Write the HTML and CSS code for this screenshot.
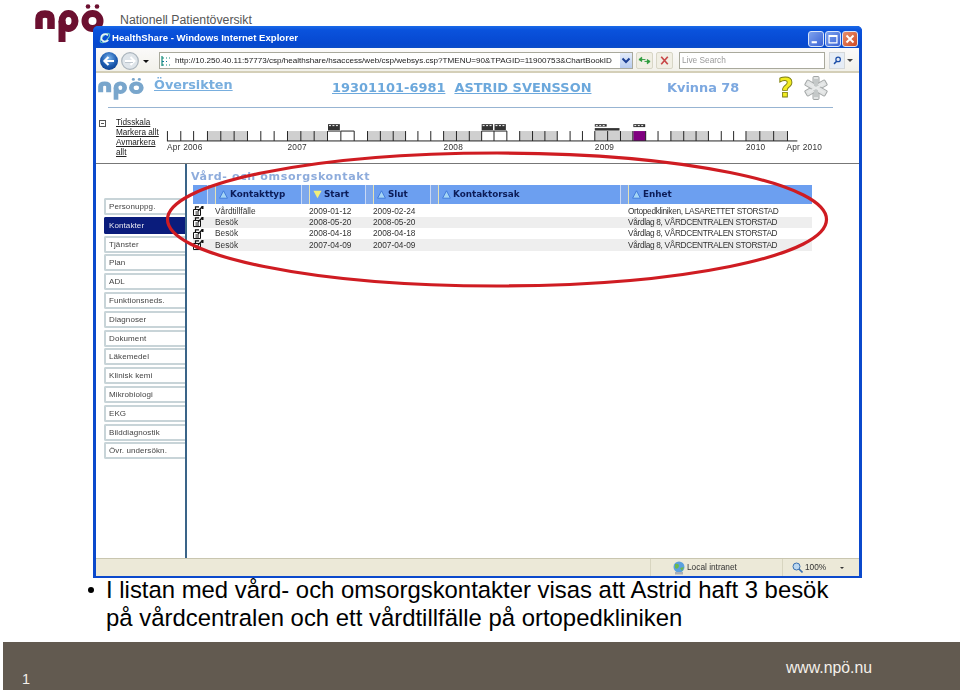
FILE: index.html
```html
<!DOCTYPE html>
<html lang="sv">
<head>
<meta charset="utf-8">
<title>Nationell Patientöversikt</title>
<link rel="stylesheet" href="styles.css">
</head>
<body>
<svg class="defs" width="0" height="0" aria-hidden="true">
  <symbol id="npo" viewBox="35 4 69 38.5" preserveAspectRatio="none">
    <path d="M39 29V19Q39 14 45 14Q51 14 51 19V29" fill="none" stroke="currentColor" stroke-width="7.5"/>
    <path d="M62 42V21" fill="none" stroke="currentColor" stroke-width="7"/>
    <ellipse cx="68.5" cy="21" rx="6.5" ry="7.5" fill="none" stroke="currentColor" stroke-width="7"/>
    <ellipse cx="92.5" cy="21" rx="7.5" ry="7.5" fill="none" stroke="currentColor" stroke-width="7"/>
    <circle cx="88" cy="6.5" r="2.3" fill="currentColor"/>
    <circle cx="97" cy="6.5" r="2.3" fill="currentColor"/>
  </symbol>
  <symbol id="edit" viewBox="0 0 11 10">
    <path d="M.5 3.5H7.5V9.5H.5ZM2.5 6H6M2.5 8H6" fill="#fff" stroke="#111" stroke-width="1"/>
    <path d="M2.5 3V.8H6M5 5L9.5 .5" fill="none" stroke="#111" stroke-width="1.2"/>
    <rect x="8.5" y="0" width="2" height="3" fill="#111"/>
  </symbol>
  <symbol id="tri-blue" viewBox="0 0 9 9">
    <path d="M4.5 .8L8.4 8.2H.6Z" fill="#a5d5f5" stroke="#3c76d8" stroke-width=".9"/>
  </symbol>
  <symbol id="tri-yellow" viewBox="0 0 9 9">
    <path d="M.4 .8H8.6L4.5 8.2Z" fill="#f2ee7a"/>
  </symbol>
</svg>

<div class="slide">
  <header class="brand">
    <svg class="brand-logo"><use href="#npo"/></svg>
    <span class="brand-name">Nationell Patientöversikt</span>
  </header>

  <section class="window">
    <div class="titlebar">
      <svg class="ie-icon" viewBox="0 0 12 12">
        <ellipse cx="6" cy="6" rx="6" ry="2.6" transform="rotate(-45 6 6)" fill="none" stroke="#6fd0c0" stroke-width="1"/>
        <path d="M9 3.4A3.8 3.8 0 1 0 9.2 8" fill="none" stroke="#e6f4f4" stroke-width="1.8"/>
      </svg>
      <span class="title-text">HealthShare - Windows Internet Explorer</span>
      <div class="win-buttons">
        <span class="win-btn"><svg viewBox="0 0 16 15"><rect x="3" y="10" width="6" height="2.4" fill="#fff"/></svg></span>
        <span class="win-btn"><svg viewBox="0 0 16 15"><path d="M3.5 3.5H12.5V12H3.5ZM3.5 4.5H12.5" fill="none" stroke="#fff" stroke-width="1.4"/></svg></span>
        <span class="win-btn win-close"><svg viewBox="0 0 16 15"><path d="M4 3.5L12 11.5M12 3.5L4 11.5" stroke="#fff" stroke-width="2.2"/></svg></span>
      </div>
    </div>

    <div class="toolbar">
      <svg class="nav-icon" viewBox="0 0 18 18">
        <defs><radialGradient id="bk" cx=".5" cy=".35" r=".7"><stop offset="0" stop-color="#7cb6ee"/><stop offset=".6" stop-color="#1d5cb0"/><stop offset="1" stop-color="#0d3d88"/></radialGradient></defs>
        <circle cx="9" cy="9" r="9" fill="url(#bk)"/>
        <path d="M14 9H5M8.5 5L4.5 9L8.5 13" fill="none" stroke="#fff" stroke-width="2.2"/>
      </svg>
      <svg class="nav-icon nav-fwd" viewBox="0 0 18 18">
        <circle cx="9" cy="9" r="8.3" fill="#dfe5ea" stroke="#aab4bc" stroke-width="1.2"/>
        <path d="M4 9H13M9.5 5L13.5 9L9.5 13" fill="none" stroke="#fff" stroke-width="2"/>
        <path d="M4 10.5H12" stroke="#b4bec6" stroke-width=".8"/>
      </svg>
      <span class="nav-arrow"></span>
      <div class="address">
        <svg class="favicon" viewBox="0 0 11 12">
          <path d="M1 1V11M1 3H3M5 3H6M8 3H9M1 10H3M5 10H6M8 10H9" stroke="#128a78" stroke-width="1.2" fill="none"/>
          <path d="M1 6.5H3M5 6.5H6" stroke="#127a98" stroke-width="1"/>
        </svg>
        <span class="url">http://10.250.40.11:57773/csp/healthshare/hsaccess/web/csp/websys.csp?TMENU=90&amp;TPAGID=11900753&amp;ChartBookID</span>
        <span class="addr-drop"><svg viewBox="0 0 12 14"><path d="M2.5 5L6 8.5L9.5 5" fill="none" stroke="#1c3f94" stroke-width="2"/></svg></span>
      </div>
      <span class="tool-btn"><svg viewBox="0 0 16 14"><path d="M2 6L5 3.5V8ZM5 6H9M14 8L11 10.5V6ZM11 8H8" fill="#2a9a3a" stroke="#2a9a3a"/></svg></span>
      <span class="tool-btn"><svg viewBox="0 0 16 14"><path d="M4.5 3L11.5 11M11.5 3L4.5 11" stroke="#c84848" stroke-width="1.8"/></svg></span>
      <div class="search"><span class="search-text">Live Search</span></div>
      <span class="search-btn"><svg viewBox="0 0 12 12"><circle cx="7.5" cy="4.5" r="3" fill="none" stroke="#1c4ea8" stroke-width="1.6"/><path d="M5.5 7L2 10.5" stroke="#1c4ea8" stroke-width="2"/></svg></span>
      <span class="search-drop"></span>
    </div>

    <div class="page">
      <div class="app-head">
        <svg class="app-logo"><use href="#npo"/></svg>
        <a class="app-title">Översikten</a>
        <div class="patient"><a>19301101-6981</a><a>ASTRID SVENSSON</a></div>
        <span class="gender">Kvinna 78</span>
        <span class="help">?</span>
        <svg class="star" viewBox="0 0 24 24">
          <g fill="#e2e4e4" stroke="#a2a6a6" stroke-width="1">
            <rect x="9" y=".5" width="6" height="23" rx="1"/>
            <rect x="9" y=".5" width="6" height="23" rx="1" transform="rotate(60 12 12)"/>
            <rect x="9" y=".5" width="6" height="23" rx="1" transform="rotate(120 12 12)"/>
          </g>
          <path d="M12 3V21" stroke="#c4c8c8" stroke-width="4"/>
          <path d="M12 3V21" stroke="#e8eaea" stroke-width="2" transform="rotate(60 12 12)"/>
          <path d="M12 3V21" stroke="#e8eaea" stroke-width="2" transform="rotate(120 12 12)"/>
        </svg>
      </div>
      <div class="head-rule"></div>

      <div class="timeline">
        <span class="collapse"></span>
        <div class="tl-links">
          <a>Tidsskala</a>
          <a>Markera allt</a>
          <a>Avmarkera allt</a>
        </div>
        <svg class="tl-chart" viewBox="162 108 673 56">
          <g fill="#cfcfcf">
            <rect x="208" y="131" width="40.5" height="10"/>
            <rect x="289" y="131" width="40.5" height="10"/>
            <rect x="370" y="131" width="38.5" height="10"/>
            <rect x="447" y="131" width="38.5" height="10"/>
            <rect x="524" y="131" width="38" height="10"/>
            <rect x="600" y="131" width="38.5" height="10"/>
            <rect x="677" y="131" width="38" height="10"/>
            <rect x="753" y="131" width="42" height="10"/>
          </g>
          <rect x="639" y="131" width="12.5" height="10" fill="#800080"/>
          <path d="M330 131H342.5M343 131H356.5M485.5 131H498M498 131H511" stroke="#222" stroke-width="1" fill="none"/>
          <path fill="none" stroke="#222" stroke-width="1" d="M167 141H805
            M167.5 131V141M181 131V141M194 131V141M208 131V141M221.5 131V141M235 131V141M248.5 131V141M262 131V141M275.5 131V141
            M289 131V141M302.5 131V141M316 131V141M329.5 131V141M343 131V141M356.5 131V141
            M370 131V141M383 131V141M396 131V141M408.5 131V141M421 131V141M434 131V141
            M447 131V141M460 131V141M473 131V141M485.5 131V141M498 131V141M511 131V141
            M524 131V141M537 131V141M549.5 131V141M562 131V141M575 131V141M587.5 131V141
            M600 131V141M613 131V141M626 131V141M638.5 131V141M651.5 131V141M664 131V141
            M677 131V141M690 131V141M702.5 131V141M715 131V141M728 131V141M740.5 131V141
            M753 131V141M767 131V141M781 131V141M795 131V141"/>
          <g fill="#333">
            <rect x="330" y="124" width="12" height="6"/>
            <rect x="485.5" y="124" width="11.5" height="6"/>
            <rect x="498.5" y="124" width="11.5" height="6"/>
            <rect x="600" y="124" width="12" height="2.5"/>
            <rect x="600" y="128" width="25" height="2.5"/>
            <rect x="639" y="124" width="12" height="3"/>
          </g>
          <path d="M331 125.5H341M486.5 125.5H496M499.5 125.5H509M601 125.5H611M640 125.5H650" stroke="#fff" stroke-width="1" stroke-dasharray="2 1.5"/>
          <g class="tl-label">
            <text x="167" y="150">Apr 2006</text>
            <text x="289" y="150">2007</text>
            <text x="447" y="150">2008</text>
            <text x="600" y="150">2009</text>
            <text x="753" y="150">2010</text>
            <text x="794" y="150">Apr 2010</text>
          </g>
        </svg>
      </div>

      <div class="main">
        <nav class="tabs">
          <a class="tab">Personuppg.</a>
          <a class="tab tab-active">Kontakter</a>
          <a class="tab">Tjänster</a>
          <a class="tab">Plan</a>
          <a class="tab">ADL</a>
          <a class="tab">Funktionsneds.</a>
          <a class="tab">Diagnoser</a>
          <a class="tab">Dokument</a>
          <a class="tab">Läkemedel</a>
          <a class="tab">Klinisk kemi</a>
          <a class="tab">Mikrobiologi</a>
          <a class="tab">EKG</a>
          <a class="tab">Bilddiagnostik</a>
          <a class="tab">Övr. undersökn.</a>
        </nav>
        <div class="content">
          <h2 class="section-title">Vård- och omsorgskontakt</h2>
          <div class="grid-head">
            <span class="gh-cell gh-first"></span>
            <span class="gh-cell"><svg class="sort"><use href="#tri-blue"/></svg>Kontakttyp</span>
            <span class="gh-cell"><svg class="sort"><use href="#tri-yellow"/></svg>Start</span>
            <span class="gh-cell"><svg class="sort"><use href="#tri-blue"/></svg>Slut</span>
            <span class="gh-cell"><svg class="sort"><use href="#tri-blue"/></svg>Kontaktorsak</span>
            <span class="gh-cell"><svg class="sort"><use href="#tri-blue"/></svg>Enhet</span>
          </div>
          <div class="grid-row">
            <svg class="row-icon"><use href="#edit"/></svg><span>Vårdtillfälle</span><span>2009-01-12</span><span>2009-02-24</span><span></span><span class="unit">Ortopedkliniken, LASARETTET STORSTAD</span>
          </div>
          <div class="grid-row row-alt">
            <svg class="row-icon"><use href="#edit"/></svg><span>Besök</span><span>2008-05-20</span><span>2008-05-20</span><span></span><span class="unit">Vårdlag 8, VÅRDCENTRALEN STORSTAD</span>
          </div>
          <div class="grid-row">
            <svg class="row-icon"><use href="#edit"/></svg><span>Besök</span><span>2008-04-18</span><span>2008-04-18</span><span></span><span class="unit">Vårdlag 8, VÅRDCENTRALEN STORSTAD</span>
          </div>
          <div class="grid-row row-alt">
            <svg class="row-icon"><use href="#edit"/></svg><span>Besök</span><span>2007-04-09</span><span>2007-04-09</span><span></span><span class="unit">Vårdlag 8, VÅRDCENTRALEN STORSTAD</span>
          </div>
        </div>
      </div>
    </div>

    <div class="statusbar">
      <span class="st-cell st-main"></span>
      <span class="st-cell st-zone">
        <svg class="st-icon" viewBox="0 0 14 14"><circle cx="7" cy="6" r="5.5" fill="#5aa0e0"/><path d="M3 3Q7 2 7 5Q6 9 3 7ZM8 7L12 6L10 10Z" fill="#6cb84c"/><rect x="3" y="11" width="8" height="2.5" fill="#a8b0b8"/></svg>
        Local intranet
      </span>
      <span class="st-cell st-zoom">
        <svg class="st-icon-small" viewBox="0 0 11 11"><circle cx="4.5" cy="4.5" r="3.5" fill="#bcd8f0" stroke="#3a70b0"/><path d="M7 7L10.5 10.5" stroke="#3a70b0" stroke-width="1.6"/></svg>
        100%
        <span class="st-arrow"></span>
      </span>
    </div>

    <svg class="ring" viewBox="0 0 769 552" aria-hidden="true">
      <ellipse cx="404" cy="193.500" rx="329.500" ry="66.500" fill="none" stroke="#cf1c22" stroke-width="3.200"/>
    </svg>
  </section>

  <ul class="bullets">
    <li>I listan med vård- och omsorgskontakter visas att Astrid haft 3 besök på vårdcentralen och ett vårdtillfälle på ortopedkliniken</li>
  </ul>

  <footer class="footer">
    <span class="page-no">1</span>
    <span class="site">www.npö.nu</span>
  </footer>
</div>
</body>
</html>
```

FILE: styles.css
```css
* { box-sizing: border-box; }
html, body { margin: 0; padding: 0; background: #fff; }
body { font-family: "Liberation Sans", Arial, sans-serif; color: #000; }
.defs { position: absolute; }
a { text-decoration: none; }

.slide { position: relative; width: 960px; height: 695px; padding-top: 26px; overflow: hidden; }

/* brand */
.brand { position: absolute; left: 35px; top: 4px; display: flex; }
.brand-logo { width: 69px; height: 38.5px; color: #6c1030; }
.brand-name { margin: 9px 0 0 16px; font-size: 12.3px; line-height: 14px; color: #555; }

/* window */
.window { position: relative; margin-left: 93px; width: 769px; height: 552px; display: flex; flex-direction: column; background: #0b49cc; border: solid #0b49cc; border-width: 0 3px 2px; border-radius: 5px 5px 0 0; filter: blur(.3px); }

.titlebar { height: 22px; margin: 0 -3px; padding: 5px 4px 0 6px; display: flex; align-items: flex-start; background: linear-gradient(#1a6ae8 0, #0a52dc 20%, #0648d0 80%, #0a4cc8 100%); border-radius: 5px 5px 0 0; }
.ie-icon { width: 12px; height: 12px; flex: none; margin-top: 1px; }
.title-text { margin-left: 1px; font-size: 9.6px; line-height: 14px; font-weight: bold; color: #fff; }
.win-buttons { margin-left: auto; display: flex; gap: 1px; }
.win-btn { width: 16px; height: 16px; border: 1px solid #d8e4f8; border-radius: 3px; background: linear-gradient(135deg, #7ea2ee, #3a62d4); }
.win-btn svg { display: block; width: 100%; height: 100%; }
.win-close { background: linear-gradient(135deg, #e8906c, #d04a24); }

.toolbar { height: 25px; padding: 4px 6px 0 4px; display: flex; align-items: flex-start; background: linear-gradient(#fbfafa, #f2f1ea); border-bottom: 2px solid #d4cfb8; }
.nav-icon { width: 18px; height: 18px; flex: none; }
.nav-fwd { margin-left: 3px; }
.nav-arrow { margin: 8px 10px 0 4px; width: 0; height: 0; border: 3px solid transparent; border-top: 3px solid #111; }
.address { width: 474px; height: 17px; display: flex; align-items: center; background: #fff; border: 1px solid #a9a99c; padding-left: 1px; }
.favicon { width: 11px; height: 12px; flex: none; }
.url { margin-left: 3px; width: 445px; flex: none; white-space: nowrap; font-size: 8.1px; color: #222; }
.addr-drop { margin-left: auto; width: 12px; height: 15px; background: linear-gradient(#e4ecfa, #b8ccf0); }
.addr-drop svg { display: block; width: 100%; height: 100%; }
.tool-btn { margin-left: 3px; width: 17px; height: 17px; background: #f1efe4; border: 1px solid #d8d6c6; border-radius: 2px; }
.tool-btn svg { display: block; width: 100%; height: 100%; }
.search { margin-left: 6px; width: 146px; height: 17px; background: #fff; border: 1px solid #a9a99c; padding-left: 2px; }
.search-text { font-size: 8.3px; line-height: 15px; color: #9a9a9a; display: block; }
.search-btn { margin-left: 4px; width: 16px; height: 17px; padding: 3px 2px; background: #e6edf6; border: 1px solid #d4d8da; }
.search-btn svg { display: block; width: 100%; height: 100%; }
.search-drop { margin-top: 7px; margin-left: 2px; width: 0; height: 0; border: 3px solid transparent; border-top: 3px solid #444; }

.page { flex: 1; min-height: 0; display: flex; flex-direction: column; background: #fff; }

.app-head { height: 34px; padding-left: 2px; display: grid; grid-template-columns: 56px 178px 335px 111px 26px 1fr; }
.app-logo { width: 46px; height: 22px; margin-top: 5px; color: #79a6cc; }
.app-title { margin-top: 4px; font: bold 12.8px/16px "DejaVu Sans", sans-serif; color: #78aede; text-decoration: underline; }
.patient { margin-top: 7px; display: flex; gap: 9px; font: bold 12.95px/16px "DejaVu Sans", sans-serif; color: #6ca8dc; }
.patient a { text-decoration: underline; }
.gender { margin-top: 7px; font: bold 12.9px/16px "DejaVu Sans", sans-serif; color: #7ca8e0; }
.help { margin-top: 1px; font: bold 27px/28px "DejaVu Sans", sans-serif; color: #f2ec22; -webkit-text-stroke: .9px #7d7d14; }
.star { width: 24px; height: 24px; margin-top: 3px; }
.head-rule { height: 1px; margin: 0 26px 0 12px; flex: none; background: #97b4d2; }

.timeline { height: 56px; flex: none; display: flex; border-bottom: 1px solid #777; }
.collapse { flex: none; margin: 12px 0 0 3px; width: 7px; height: 7px; border: 1px solid #555; background: linear-gradient(#555, #555) center / 3px 1px no-repeat; }
.tl-links { width: 46px; margin-left: 10px; padding-top: 10px; display: flex; flex-direction: column; font-size: 8.2px; line-height: 10px; color: #222; flex: none; }
.tl-links a { text-decoration: underline; }
.tl-chart { width: 665px; height: 56px; flex: none; overflow: visible; }
.tl-label text { font-size: 8.4px; fill: #333; font-family: "Liberation Sans", sans-serif; letter-spacing: .25px; }

.main { flex: 1; min-height: 0; display: flex; }
.tabs { width: 91px; flex: none; padding: 34px 0 0 8px; display: flex; flex-direction: column; gap: 1.8px; border-right: 2px solid #3a6488; }
.tab { height: 17px; padding-left: 3px; background: #fff; border: 2px solid #c8d4d8; border-right: 0; border-radius: 2px 0 0 2px; font-size: 8px; line-height: 14px; letter-spacing: .1px; color: #444; }
.tab-active { background: #0a1c7c; border-color: #0a1c7c; color: #e8e8f0; }

.content { flex: 1; padding-left: 4px; }
.section-title { margin: 6px 0 2px; font: bold 11.1px/13px "DejaVu Sans", sans-serif; letter-spacing: .6px; color: #8eacdc; }
.grid-head, .grid-row { margin-left: 2px; width: 619px; display: grid; grid-template-columns: 22px 94px 64px 65px 190px 184px; }
.grid-head { height: 19px; margin-bottom: 1.5px; background: #6c9ff0; }
.gh-cell { display: flex; align-items: center; padding-left: 3px; border-left: 1px solid #e6e2b4; box-shadow: inset -7px 0 0 #7ea8ec, inset -8px 0 0 #c9d8f4; font: bold 8.8px/19px "DejaVu Sans", sans-serif; color: #0c1c58; }
.gh-first { border-left: 0; }
.gh-cell:last-child { box-shadow: none; }
.sort { width: 9px; height: 9px; margin-right: 2px; flex: none; }
.grid-row { height: 11.33px; align-items: center; font-size: 8.3px; line-height: 11px; color: #333; white-space: nowrap; }
.row-alt { background: #eee; }
.row-icon { width: 11px; height: 10px; }
.unit { letter-spacing: -.33px; }

.statusbar { height: 18px; flex: none; display: flex; background: #ece9d8; border-top: 1px solid #c9c6b0; font-size: 8.3px; line-height: 17px; color: #333; }
.st-cell { display: flex; align-items: center; border-right: 1px solid #d8d5c0; }
.st-main { width: 555px; }
.st-zone { width: 132px; padding-left: 21px; gap: 1px; }
.st-zoom { flex: 1; padding-left: 9px; gap: 2px; border-right: 0; }
.st-icon { width: 14px; height: 14px; }
.st-icon-small { width: 11px; height: 11px; }
.st-arrow { margin: 3px 0 0 12px; width: 0; height: 0; border: 2px solid transparent; border-top: 2px solid #333; }

.ring { position: absolute; left: -3px; top: 0; width: 769px; height: 552px; pointer-events: none; }

/* slide text */
.bullets { margin: -2px 0 0; padding: 0 125px 0 106px; font-size: 23.9px; line-height: 28px; color: #000; list-style: none; }
.bullets li { position: relative; }
.bullets li::before { content: ""; position: absolute; left: -18px; top: 11px; width: 6px; height: 6px; border-radius: 50%; background: #000; }

.footer { margin: 10px 0 0 3px; height: 48px; display: flex; align-items: flex-start; justify-content: space-between; padding: 0 88px 0 19px; background: #625a50; color: #f4f0ea; }
.page-no { margin-top: 28px; font-size: 14.5px; line-height: 18px; }
.site { margin-top: 16px; font-size: 15.8px; line-height: 20px; }
```
